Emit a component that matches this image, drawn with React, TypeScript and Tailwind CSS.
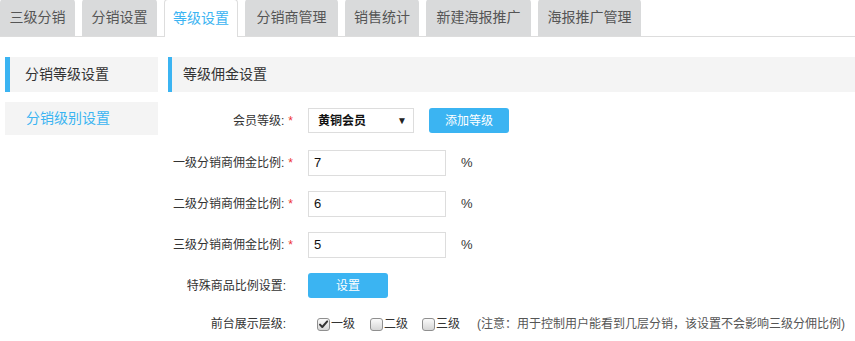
import React from "react";

const tabs = ["三级分销", "分销设置", "等级设置", "分销商管理", "销售统计", "新建海报推广", "海报推广管理"];
const tabWidths = ["w-[75px]", "w-[75px]", "w-[74px]", "w-[93px]", "w-[74px]", "w-[105px]", "w-[103px]"];

function Star() {
  return <span className="ml-[4px] text-[#e33]">*</span>;
}

function Label({ text, star }: { text: string; star?: boolean }) {
  return (
    <div className="w-[126px] shrink-0 text-right text-[12px] text-[#333] pr-[1px]">
      {text}
      {star ? <Star /> : <span className="inline-block w-[7px]" />}
    </div>
  );
}

function Check({ checked }: { checked?: boolean }) {
  return (
    <span className="relative inline-flex h-[13px] w-[13px] items-center justify-center rounded-[3px] border border-[#8f8f8f] bg-gradient-to-b from-[#fafafa] to-[#d6d6d6]">
      {checked && (
        <svg width="11" height="11" viewBox="0 0 11 11">
          <path d="M2 5.6 L4.3 8 L9.2 2.4" fill="none" stroke="#333" strokeWidth="2" strokeLinecap="round" strokeLinejoin="round" />
        </svg>
      )}
    </span>
  );
}

export default function App() {
  const font = { fontFamily: '"Microsoft YaHei", "Liberation Sans", "Noto Sans CJK SC", sans-serif' };
  return (
    <div className="w-[855px] h-[341px] overflow-hidden bg-white" style={font}>
      {/* tabs */}
      <div className="flex h-[37px] items-end gap-[7px] border-b border-[#dddddd] font-['Liberation_Sans','Noto_Sans_CJK_SC',sans-serif]">
        {tabs.map((t, i) => (
          <div
            key={t}
            className={
              "flex h-[37px] items-center justify-center rounded-t-[4px] text-[14px] " +
              tabWidths[i] +
              (i === 2
                ? " -mb-px h-[38px] border border-b-0 border-[#dddddd] bg-white text-[#3bb4f2]"
                : " bg-[#d9dadb] text-[#555555]")
            }
          >
            {t}
          </div>
        ))}
      </div>

      <div className="flex pt-[20px] font-['Liberation_Sans','Noto_Sans_CJK_SC',sans-serif]">
        {/* sidebar */}
        <div className="ml-[5px] w-[153px] shrink-0">
          <div className="flex h-[35px] items-center border-l-[5px] border-[#3bb4f2] bg-[#f4f4f4] pl-[15px] text-[14px] text-[#333]">
            分销等级设置
          </div>
          <div className="mt-[10px] flex h-[33px] items-center bg-[#f4f4f4] pl-[21px] text-[14px] text-[#3bb4f2]">
            分销级别设置
          </div>
        </div>

        {/* main */}
        <div className="ml-[10px] flex-1">
          <div className="flex h-[35px] items-center border-l-[4px] border-[#3bb4f2] bg-[#f4f4f4] pl-[11px] text-[14px] text-[#333]">
            等级佣金设置
          </div>

          <div className="mt-[16px] flex h-[25px] items-center">
            <Label text="会员等级:" star />
            <div className="ml-[14px] flex h-[25px] w-[106px] items-center justify-between border border-[#dddddd] pl-[9px] pr-[6px] text-[12px] font-semibold text-[#111]">
              <span>黄铜会员</span>
              <span className="text-[10px] font-normal text-[#222]">▼</span>
            </div>
            <div className="ml-[15px] flex h-[25px] w-[80px] items-center justify-center rounded-[3px] bg-[#3bb4f2] text-[12px] text-white">
              添加等级
            </div>
          </div>

          {[
            ["一级分销商佣金比例:", "7", "mt-[17px]"],
            ["二级分销商佣金比例:", "6", "mt-[16px]"],
            ["三级分销商佣金比例:", "5", "mt-[16px]"],
          ].map(([l, v, m]) => (
            <div key={l} className={m + " flex h-[25px] items-center"}>
              <Label text={l} star />
              <div className="ml-[14px] flex h-[26px] w-[138px] items-center border border-[#dddddd] pl-[5px] text-[13px] text-[#111]">
                {v}
              </div>
              <span className="ml-[15px] text-[13px] text-[#333]">%</span>
            </div>
          ))}

          <div className="mt-[16px] flex h-[25px] items-center">
            <Label text="特殊商品比例设置:" />
            <div className="ml-[14px] flex h-[25px] w-[80px] items-center justify-center rounded-[3px] bg-[#3bb4f2] text-[12px] text-white">
              设置
            </div>
          </div>

          <div className="mt-[14px] flex h-[24px] items-center text-[12px] text-[#333]">
            <Label text="前台展示层级:" />
            <div className="ml-[23px] flex items-center">
              <Check checked />
              <span className="ml-[1px]">一级</span>
            </div>
            <div className="ml-[15px] flex items-center">
              <Check />
              <span className="ml-[1px]">二级</span>
            </div>
            <div className="ml-[14px] flex items-center">
              <Check />
              <span className="ml-[1px]">三级</span>
            </div>
            <span className="ml-[17px] text-[#555]">(注意：用于控制用户能看到几层分销，该设置不会影响三级分佣比例)</span>
          </div>
        </div>
      </div>
    </div>
  );
}
